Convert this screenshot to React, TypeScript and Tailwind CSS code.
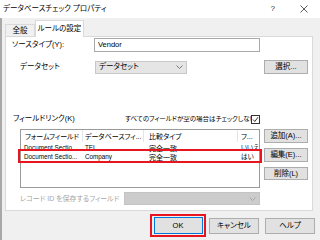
import React from "react";

const jp = "[font-family:'Liberation_Sans','Noto_Sans_CJK_JP',sans-serif] [font-feature-settings:'palt'] whitespace-nowrap";

const Btn = ({ label, className = "" }: { label: string; className?: string }) => (
  <div className={`flex items-center justify-center bg-[#e1e1e1] border border-[#adadad] text-[7.5px] text-black leading-none ${className}`}>
    {label}
  </div>
);

const Chevron = ({ color = "#606060" }: { color?: string }) => (
  <svg width="7" height="4" viewBox="0 0 7 4" className="shrink-0">
    <path d="M0.5 0.5 L3.5 3.5 L6.5 0.5" fill="none" stroke={color} strokeWidth="0.8" />
  </svg>
);

const rows = [
  { form: "Document Sectio...", db: "TEL", cmp: "完全一致", f: "いいえ" },
  { form: "Document Sectio...", db: "Company", cmp: "完全一致", f: "はい" },
];

export default function App() {
  return (
    <div className={`w-[320px] h-[240px] bg-[#f0f0f0] overflow-hidden flex flex-col ${jp}`}>
      {/* title bar */}
      <div className="h-[18px] bg-white flex items-center pl-[3px] shrink-0">
        <span className="text-[7.5px] text-black leading-none">データベースチェック プロパティ</span>
        <span className="ml-auto text-[8px] text-[#333] leading-none mr-[25px]">?</span>
        <svg width="8" height="8" viewBox="0 0 8 8" className="mr-[12px]">
          <path d="M0.5 0.5 L7.5 7.5 M7.5 0.5 L0.5 7.5" stroke="#333" strokeWidth="0.8" />
        </svg>
      </div>

      <div className="flex-1 flex flex-col border-l-2 border-[#a8a8a8]">
        {/* tabs */}
        <div className="flex items-end h-[17px] pl-[3px] mt-px">
          <div className="h-[12px] w-[30px] border border-b-0 border-[#d9d9d9] bg-[#f0f0f0] flex items-center justify-center text-[7.5px] leading-none">
            全般
          </div>
          <div className="h-[17px] w-[49px] border border-b-0 border-[#d9d9d9] bg-white flex items-center justify-center text-[7.5px] leading-none -mb-px relative z-10">
            ルールの設定
          </div>
        </div>

        {/* tab panel */}
        <div className="ml-[3px] w-[308px] h-[175px] bg-white border border-[#d9d9d9] flex flex-col text-[7.5px] leading-none text-black">
          {/* source type */}
          <div className="flex items-center mt-[1px] h-[14px]">
            <span className="w-[88px] pl-[6px]">ソースタイプ(Y):</span>
            <div className="w-[166px] h-[14px] border border-[#a9a9a9] flex items-center pl-[3px]">Vendor</div>
          </div>

          {/* dataset */}
          <div className="flex items-center mt-[8px] h-[14px]">
            <span className="w-[89px] pl-[14px]">データセット</span>
            <div className="w-[92px] h-[13px] border border-[#c8c8c8] bg-[#e5e5e5] flex items-center pl-[3px] pr-[3px]">
              <span>データセット</span>
              <span className="ml-auto"><Chevron /></span>
            </div>
            <Btn label="選択..." className="ml-auto mr-[4px] w-[44px] h-[14px]" />
          </div>

          {/* field link header */}
          <div className="flex items-center mt-[40px] h-[10px]">
            <span className="pl-[7px] w-[119px]">フィールドリンク(K)</span>
            <div className="w-[126px] overflow-hidden text-[6.5px]">すべてのフィールドが空の場合はチェックしない</div>
            <div className="w-[9px] h-[9px] border border-[#333] bg-white flex items-center justify-center">
              <svg width="7" height="7" viewBox="0 0 7 7">
                <path d="M1 3.5 L2.8 5.5 L6 1.2" fill="none" stroke="#222" strokeWidth="0.9" />
              </svg>
            </div>
          </div>

          {/* list + side buttons */}
          <div className="flex mt-[5px]">
            <div className="ml-[14px] w-[240px] h-[59px] border border-[#9a9a9a] bg-white relative">
              <div className="flex h-[12px] items-center text-[7px]">
                <span className="w-[62px] pl-[4px] border-r border-[#e5e5e5] h-full flex items-center overflow-hidden">フォームフィールド</span>
                <span className="w-[61px] pl-[2px] border-r border-[#e5e5e5] h-full flex items-center overflow-hidden">データベースフィ...</span>
                <span className="w-[94px] pl-[5px] border-r border-[#e5e5e5] h-full flex items-center overflow-hidden">比較タイプ</span>
                <span className="pl-[3px] h-full flex items-center">フ...</span>
              </div>
              <div className="flex flex-col mt-[2px]">
                {rows.map((r, i) => (
                  <div key={i} className="flex h-[9px] items-center text-[6.3px]">
                    <span className="w-[62px] pl-[3px] overflow-hidden">{r.form}</span>
                    <span className="w-[61px] pl-[2px] overflow-hidden">{r.db}</span>
                    <span className="w-[94px] pl-[5px] text-[7px]">{r.cmp}</span>
                    <span className="pl-[3px] text-[6.5px]">{r.f}</span>
                  </div>
                ))}
              </div>
              <div className="absolute left-[-3px] top-[19px] w-[244px] h-[14px] border-2 border-[#e8141e]" />
            </div>
            <div className="ml-[4px] flex flex-col gap-[5px]">
              <Btn label="追加(A)..." className="w-[44px] h-[14px]" />
              <Btn label="編集(E)..." className="w-[44px] h-[14px]" />
              <Btn label="削除(L)" className="w-[44px] h-[13px]" />
            </div>
          </div>

          {/* record id */}
          <div className="flex items-center mt-[4px] h-[13px]">
            <span className="pl-[14px] w-[118px] text-[#a6a6a6] text-[7px] overflow-hidden">レコード ID を保存するフィールド</span>
            <div className="w-[136px] h-[13px] bg-[#cccccc] border border-[#c4c4c4] flex items-center justify-end pr-[3px]">
              <Chevron color="#9a9a9a" />
            </div>
          </div>
        </div>

        {/* bottom buttons */}
        <div className="flex items-center mt-[3px] ml-[148px] gap-[3px]">
          <div className="w-[56px] h-[23px] border-2 border-[#e8141e] flex items-center justify-center">
            <div className="w-[49px] h-[17px] bg-[#e1e1e1] border border-[#0078d7] flex items-center justify-center text-[7.5px] leading-none">
              OK
            </div>
          </div>
          <Btn label="キャンセル" className="w-[50px] h-[16px]" />
          <Btn label="ヘルプ" className="ml-[3px] w-[50px] h-[16px]" />
        </div>
      </div>
    </div>
  );
}
